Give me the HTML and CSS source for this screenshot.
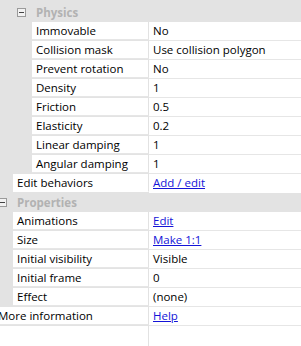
FILE: index.html
```html
<!DOCTYPE html>
<html lang="en">
<head>
    <meta charset="UTF-8">
    <title>Properties</title>
    <link rel="stylesheet" href="styles.css">
</head>
<body>
<div class="sheet">
    <div class="group top l1"><span class="toggle"></span><span class="title">Physics</span></div>
    <div class="row l2"><div class="name">Immovable</div><div class="val">No</div></div>
    <div class="row l2"><div class="name">Collision mask</div><div class="val">Use collision polygon</div></div>
    <div class="row l2"><div class="name">Prevent rotation</div><div class="val">No</div></div>
    <div class="row l2"><div class="name">Density</div><div class="val">1</div></div>
    <div class="row l2"><div class="name">Friction</div><div class="val">0.5</div></div>
    <div class="row l2"><div class="name">Elasticity</div><div class="val">0.2</div></div>
    <div class="row l2"><div class="name">Linear damping</div><div class="val">1</div></div>
    <div class="row l2"><div class="name">Angular damping</div><div class="val">1</div></div>
    <div class="row l1 last"><div class="name">Edit behaviors</div><div class="val"><a href="#">Add / edit</a></div></div>

    <div class="group l0"><span class="toggle"></span><span class="title">Properties</span></div>
    <div class="row l1"><div class="name">Animations</div><div class="val"><a href="#">Edit</a></div></div>
    <div class="row l1"><div class="name">Size</div><div class="val"><a href="#">Make 1:1</a></div></div>
    <div class="row l1"><div class="name">Initial visibility</div><div class="val">Visible</div></div>
    <div class="row l1"><div class="name">Initial frame</div><div class="val">0</div></div>
    <div class="row l1"><div class="name">Effect</div><div class="val">(none)</div></div>
    <div class="row l0"><div class="name">More information</div><div class="val"><a href="#">Help</a></div></div>

    <div class="filler"><div class="name"></div></div>
</div>
</body>
</html>
```

FILE: styles.css
```css
body {
    margin: 0;
    overflow: hidden;
    background: #fff;
    font-family: "Open Sans", "Noto Sans", sans-serif;
    font-size: 11.5px;
    color: #000;
}

/* сітка зсунута на 6px вліво, як у прокрученому дереві */
.sheet {
    display: flex;
    flex-direction: column;
    width: 307px;
    height: 100vh;
    margin-left: -6px;
}

.row {
    display: flex;
    height: 19px;
    background: #e3e3e3;
}
.row .name,
.row .val {
    height: 18px;
    line-height: 18px;
    border-bottom: 1px solid #e6e6e6;
    background: #fff;
    white-space: nowrap;
}
.row.last .name,
.row.last .val {
    border-bottom-color: #fff;
}
.name {
    flex: none;
    padding-left: 4px;
    border-right: 1px solid #e2e2e2;
    box-sizing: border-box;
}
.val {
    flex: 1;
    padding-left: 4px;
}
.val a {
    color: #1414d8;
}

.l0 { padding-left: 0; }
.l1 { padding-left: 19px; }
.l2 { padding-left: 38px; }
.l0 .name { width: 155px; }
.l1 .name { width: 136px; }
.l2 .name { width: 117px; }

/* заголовки груп */
.group {
    display: flex;
    align-items: center;
    height: 19px;
    background: #e3e3e3;
}
.group.top {
    height: 22px;
    padding-top: 3px;
    box-sizing: border-box;
}
.toggle {
    position: relative;
    width: 9px;
    height: 9px;
    margin-left: 4px;
    border: 1px solid #9a9a9a;
    box-sizing: border-box;
    background: #f2f2f2;
}
.toggle::after {
    content: "";
    position: absolute;
    left: 1px;
    top: 3px;
    width: 5px;
    height: 1px;
    background: #444;
}
.title {
    margin-left: 10px;
    font-weight: bold;
    color: #b2b2b2;
}

.filler {
    flex: 1;
    display: flex;
}
.filler .name {
    width: 155px;
}
```
